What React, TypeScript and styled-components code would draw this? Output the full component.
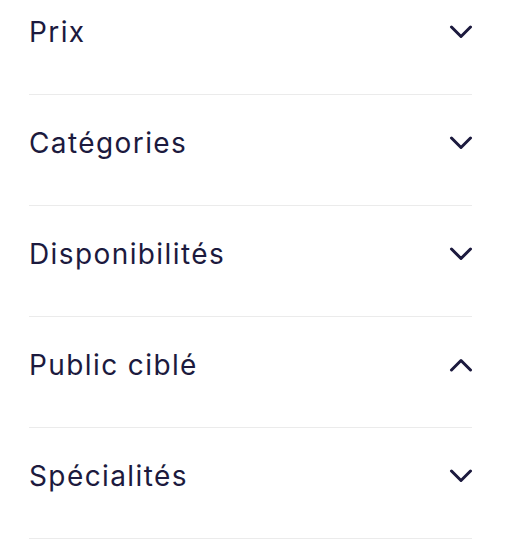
import React, { useState } from "react";
import styled, { createGlobalStyle } from "styled-components";

const GlobalStyle = createGlobalStyle`
  html, body {
    margin: 0;
    padding: 0;
    background: #ffffff;
  }
  body {
    font-family: "Inter", "Open Sans", sans-serif;
  }
`;

const List = styled.div`
  display: flex;
  flex-direction: column;
  padding: 0 52px 0 29px;
`;

const Item = styled.div`
  border-bottom: 1px solid #ebebeb;
`;

const Header = styled.button<{ $first?: boolean }>`
  display: flex;
  align-items: center;
  justify-content: space-between;
  width: 100%;
  box-sizing: border-box;
  padding: ${(p) => (p.$first ? "16px" : "32px")} 0 46px 0;
  margin: 0;
  border: 0;
  background: transparent;
  cursor: pointer;
  text-align: left;
`;

const Title = styled.span`
  font-family: "Inter", "Open Sans", sans-serif;
  font-size: 28px;
  line-height: 32px;
  font-weight: 400;
  letter-spacing: 1.4px;
  color: #1c1a3e;
`;

const Chevron = styled.svg<{ $open?: boolean }>`
  width: 24px;
  height: 14px;
  flex: none;
  margin-right: -1px;
  transform: ${(p) => (p.$open ? "rotate(180deg)" : "none")};
`;

const items = [
  "Prix",
  "Catégories",
  "Disponibilités",
  "Public ciblé",
  "Spécialités",
];

export default function App() {
  const [open, setOpen] = useState<string | null>("Public ciblé");
  return (
    <>
      <GlobalStyle />
      <List>
        {items.map((label, i) => (
          <Item key={label}>
            <Header
              $first={i === 0}
              onClick={() => setOpen(open === label ? null : label)}
            >
              <Title>{label}</Title>
              <Chevron $open={open === label} viewBox="0 0 24 14" fill="none">
                <polyline
                  points="2.5,2 12,11.5 21.5,2"
                  stroke="#1c1a3e"
                  strokeWidth="3"
                  strokeLinecap="round"
                  strokeLinejoin="round"
                />
              </Chevron>
            </Header>
          </Item>
        ))}
      </List>
    </>
  );
}
